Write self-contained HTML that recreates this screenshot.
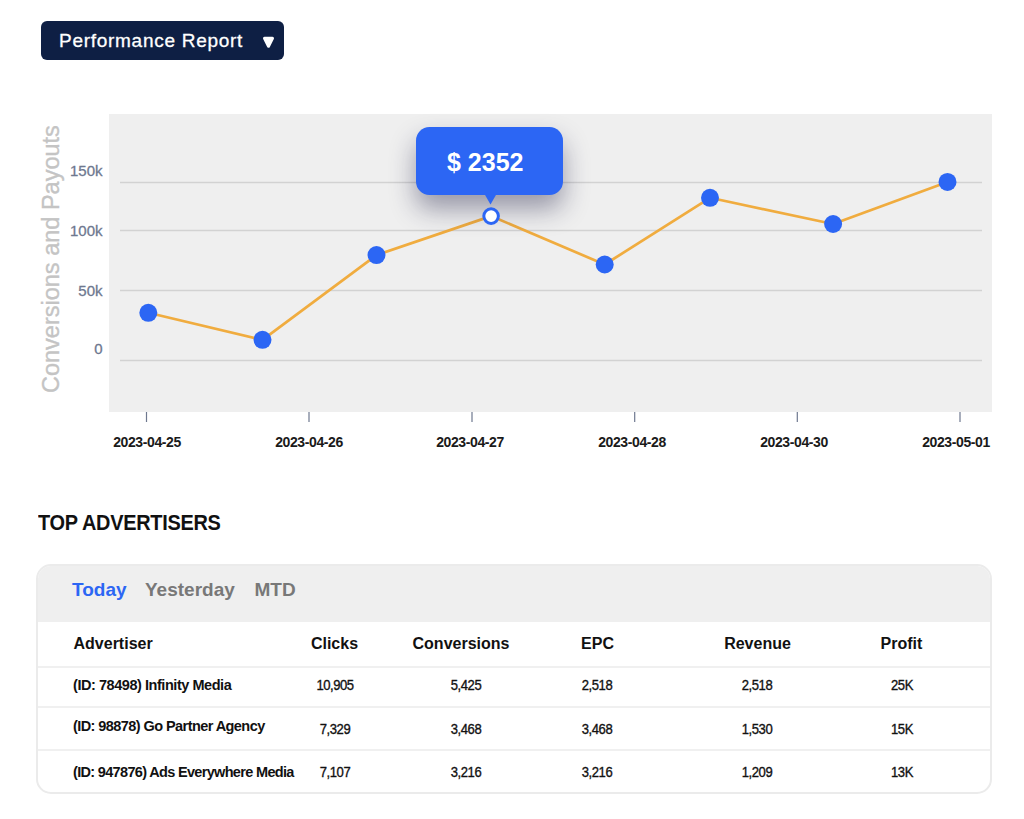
<!DOCTYPE html>
<html>
<head>
<meta charset="utf-8">
<style>
html,body{margin:0;padding:0;background:#fff;}
body{width:1024px;height:819px;position:relative;overflow:hidden;font-family:"Liberation Sans",sans-serif;color:#111;}
.abs{position:absolute;white-space:nowrap;line-height:1;}
#btn{position:absolute;left:41px;top:21px;width:243px;height:39px;background:#0e1f44;border-radius:6px;}
#btn .t{position:absolute;left:18px;top:9.5px;color:#fff;-webkit-text-stroke:0.3px #fff;font-size:19px;letter-spacing:0.72px;line-height:1;}
#btn svg{position:absolute;left:220.5px;top:14.5px;}
#chartbg{position:absolute;left:109px;top:114px;width:883px;height:298px;background:#efefef;}
.yl{position:absolute;color:#6e788f;font-size:15px;-webkit-text-stroke:0.3px #6e788f;line-height:1;text-align:right;width:40px;}
.xl{position:absolute;color:#1a1a1a;font-size:14px;font-weight:bold;line-height:1;width:100px;text-align:center;letter-spacing:-0.4px;}
#ytitle{position:absolute;left:40px;top:126px;width:0;height:0;}
#ytitle span{position:absolute;left:0;top:0;transform-origin:0 0;transform:translate(0px,267px) rotate(-90deg);color:#c4c4c4;-webkit-text-stroke:0.35px #c4c4c4;font-size:23.5px;line-height:1;white-space:nowrap;}
#tip{position:absolute;left:415.5px;top:127px;width:147.5px;height:68px;background:#2c66f4;border-radius:13.5px;box-shadow:0 14px 26px rgba(30,30,70,0.42);}
#tip .t{position:absolute;left:31.5px;top:23px;color:#fff;font-size:25px;font-weight:bold;line-height:1;}
#h2{position:absolute;left:38px;top:512px;font-size:22px;font-weight:bold;line-height:1;letter-spacing:-0.3px;transform:scaleX(0.905);transform-origin:0 0;color:#111;}
#card{position:absolute;left:36px;top:564px;width:952px;height:226px;border:2px solid #ebebeb;border-radius:15px;overflow:hidden;background:#fff;}
#card .head{position:absolute;left:0;top:0;width:100%;height:55.5px;background:#efefef;}
.tab{position:absolute;font-size:19px;font-weight:bold;line-height:1;}
.sep{position:absolute;left:0;width:100%;height:2px;background:#f0f0f0;}
.th{position:absolute;font-size:16px;font-weight:bold;line-height:1;color:#111;}
.td{position:absolute;font-size:14.5px;font-weight:normal;line-height:1;color:#111;letter-spacing:-0.7px;-webkit-text-stroke:0.35px #111;}
.c{text-align:center;width:120px;}
.td.c{transform:scaleX(0.9);letter-spacing:-0.5px;}
.nm{font-size:14.5px;letter-spacing:-0.5px;font-weight:bold;-webkit-text-stroke:0;}
</style>
</head>
<body>
<div id="btn"><span class="t">Performance Report</span>
<svg width="13" height="13" viewBox="0 0 13 13"><path d="M2.5 2.3 L10.5 2.3 L6.5 10.2 Z" fill="#fff" stroke="#fff" stroke-width="3" stroke-linejoin="round"/></svg>
</div>

<div id="chartbg"></div>
<svg style="position:absolute;left:0;top:0" width="1024" height="819">
  <g stroke="#d2d2d2" stroke-width="1.5">
    <line x1="120" y1="182.5" x2="982" y2="182.5"/>
    <line x1="120" y1="230.5" x2="982" y2="230.5"/>
    <line x1="120" y1="290.5" x2="982" y2="290.5"/>
    <line x1="120" y1="360.5" x2="982" y2="360.5"/>
  </g>
  <g stroke="#6e788f" stroke-width="1.2">
    <line x1="146.5" y1="412" x2="146.5" y2="422"/>
    <line x1="309" y1="412" x2="309" y2="422"/>
    <line x1="472" y1="412" x2="472" y2="422"/>
    <line x1="634.7" y1="412" x2="634.7" y2="422"/>
    <line x1="797.3" y1="412" x2="797.3" y2="422"/>
    <line x1="960" y1="412" x2="960" y2="422"/>
  </g>
  <polyline fill="none" stroke="#f0ac3f" stroke-width="2.7" stroke-linejoin="round" points="148.3,312.8 262.5,339.8 376.5,255.1 491.1,216.1 604.7,264.5 710,197.8 833.1,224 947.5,181.9"/>
  <g fill="#2c66f4">
    <circle cx="148.3" cy="312.8" r="9"/>
    <circle cx="262.5" cy="339.8" r="9"/>
    <circle cx="376.5" cy="255.1" r="9"/>
    <circle cx="604.7" cy="264.5" r="9"/>
    <circle cx="710" cy="197.8" r="9"/>
    <circle cx="833.1" cy="224" r="9"/>
    <circle cx="947.5" cy="181.9" r="9"/>
  </g>
</svg>

<div class="yl" style="left:62.5px;top:163px;">150k</div>
<div class="yl" style="left:62.5px;top:222.5px;">100k</div>
<div class="yl" style="left:62.5px;top:283px;">50k</div>
<div class="yl" style="left:62.5px;top:341px;">0</div>

<div id="ytitle"><span>Conversions and Payouts</span></div>

<div class="xl" style="left:97px;top:435px;">2023-04-25</div>
<div class="xl" style="left:259px;top:435px;">2023-04-26</div>
<div class="xl" style="left:420px;top:435px;">2023-04-27</div>
<div class="xl" style="left:582px;top:435px;">2023-04-28</div>
<div class="xl" style="left:744px;top:435px;">2023-04-30</div>
<div class="xl" style="left:906px;top:435px;">2023-05-01</div>

<div id="tip"><span class="t">$ 2352</span>
<svg style="position:absolute;left:68px;top:67px" width="13" height="11" viewBox="0 0 13 11"><path d="M0.5 0 L12.5 0 L6.5 10.5 Z" fill="#2c66f4"/></svg>
</div>

<svg style="position:absolute;left:0;top:0" width="1024" height="300"><circle cx="491.1" cy="216.1" r="7.3" fill="#fff" stroke="#2c66f4" stroke-width="3"/></svg>

<div id="h2">TOP ADVERTISERS</div>

<div id="card">
  <div class="head"></div>
  <div class="tab" style="left:34px;top:13.5px;color:#2c66f4;">Today</div>
  <div class="tab" style="left:107px;top:13.5px;color:#787878;">Yesterday</div>
  <div class="tab" style="left:216.5px;top:13.5px;color:#787878;">MTD</div>

  <div class="th" style="left:35.5px;top:70px;">Advertiser</div>
  <div class="th c" style="left:236.5px;top:70px;">Clicks</div>
  <div class="th c" style="left:363px;top:70px;">Conversions</div>
  <div class="th c" style="left:499.5px;top:70px;">EPC</div>
  <div class="th c" style="left:659.5px;top:70px;">Revenue</div>
  <div class="th c" style="left:803.5px;top:70px;">Profit</div>

  <div class="sep" style="top:99.5px;"></div>
  <div class="sep" style="top:140px;"></div>
  <div class="sep" style="top:183px;"></div>

  <div class="td nm" style="left:35px;top:112px;letter-spacing:-0.45px;">(ID: 78498) Infinity Media</div>
  <div class="td c" style="left:236.5px;top:112px;">10,905</div>
  <div class="td c" style="left:368px;top:112px;">5,425</div>
  <div class="td c" style="left:498.5px;top:112px;">2,518</div>
  <div class="td c" style="left:658.5px;top:112px;">2,518</div>
  <div class="td c" style="left:803.5px;top:112px;">25K</div>

  <div class="td nm" style="left:35px;top:153px;letter-spacing:-0.57px;">(ID: 98878) Go Partner Agency</div>
  <div class="td c" style="left:236.5px;top:156px;">7,329</div>
  <div class="td c" style="left:368px;top:156px;">3,468</div>
  <div class="td c" style="left:498.5px;top:156px;">3,468</div>
  <div class="td c" style="left:658.5px;top:156px;">1,530</div>
  <div class="td c" style="left:803.5px;top:156px;">15K</div>

  <div class="td nm" style="left:35px;top:199px;letter-spacing:-0.67px;">(ID: 947876) Ads Everywhere Media</div>
  <div class="td c" style="left:236.5px;top:199px;">7,107</div>
  <div class="td c" style="left:368px;top:199px;">3,216</div>
  <div class="td c" style="left:498.5px;top:199px;">3,216</div>
  <div class="td c" style="left:658.5px;top:199px;">1,209</div>
  <div class="td c" style="left:803.5px;top:199px;">13K</div>
</div>
</body>
</html>
